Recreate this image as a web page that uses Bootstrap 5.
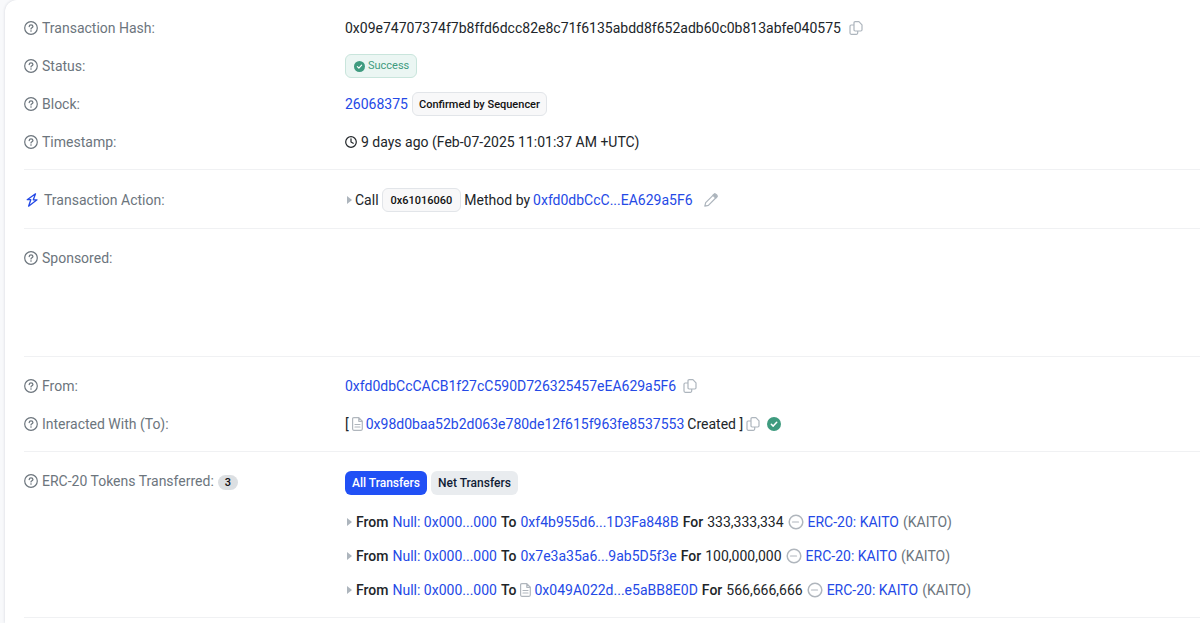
<!DOCTYPE html>
<html lang="en">
<head>
<meta charset="utf-8">
<meta name="viewport" content="width=device-width, initial-scale=1">
<title>Transaction Details</title>
<link href="https://cdn.jsdelivr.net/npm/bootstrap@5.3.0/dist/css/bootstrap.min.css" rel="stylesheet">
<style>
  body { font-family: Roboto, "Liberation Sans", sans-serif; font-size: 14px; line-height: 22px; color: #212529; background: #f8f9fb; overflow-x: hidden; }
  a { color: #2449e6; text-decoration: none; }
  svg { display: block; flex: none; fill: none; stroke: currentColor; stroke-linecap: round; stroke-linejoin: round; }
  .panel { margin-left: 5px; padding-left: 19px; background: #fff; border-radius: 12px 0 0 0; box-shadow: 0 0 3px rgba(20, 30, 60, .16); min-height: 100vh; }
  .section { padding: 17px 0 15px; border-bottom: 1px solid #f0f1f3; display: grid; gap: 14px; }
  .section:first-child { padding-top: 16px; }
  .sponsor { min-height: 128px; align-content: start; }
  .fact { display: grid; grid-template-columns: 321px minmax(0, 1fr); }
  .fact dt { font-weight: 400; color: #6c757d; min-height: 24px; }
  .fact dd { margin: 0; min-height: 24px; }
  .fact-action dt, .fact-action dd { min-height: 26px; }
  .line { display: flex; align-items: center; flex-wrap: wrap; gap: 4px; }
  .tight { gap: 3px; }
  .icon-btn { border: 0; padding: 0; background: none; color: #adb5bd; margin-left: 4px; }
  .far { margin-left: 8px; }
  .caret { margin-left: 2px; }
  .bolt { color: #2449e6; }
  .tag { font-size: 11px; line-height: 16px; padding: 4px 6px 2px; border: 1px solid #e2e5e9; border-radius: 6px; background: #f8f8f9; color: #111; font-weight: 500; }
  .tag-ok { background: #ebf6f3; border-color: #c9e5dc; color: #3f9b7f; font-weight: 400; gap: 3px; padding: 3px 7px 3px 8px; }
  .count { background: #dcdfe2; color: #111; font-size: 11px; line-height: 15px; padding: 0 7px; font-weight: 500; margin-top: 2px; }
  .tabs { min-height: 28px; margin-bottom: 13px; }
  .tabs .btn { font-size: 12px; line-height: 16px; padding: 4px 7px; border: 0; border-radius: 6px; font-weight: 500; background: #e9ecef; color: #101c36; }
  .tabs .btn.active { background: #2150f5; color: #fff; }
  .transfers { display: grid; gap: 10px; }
  .transfers li { min-height: 24px; }
  .strong-word { font-weight: 500; }
  .dim { color: #b0b6bd; }
  @media (max-width: 767px) { .fact { grid-template-columns: minmax(0, 1fr); } dd { overflow-wrap: anywhere; } }
</style>
</head>
<body>
<svg class="d-none" aria-hidden="true">
  <symbol id="help" viewBox="0 0 14 14"><circle cx="7" cy="7" r="6.3" stroke-width="1.2"/><path d="M5.2 5.5c.1-1 .8-1.6 1.8-1.6 1.1 0 1.9.6 1.9 1.5 0 .6-.3 1-.9 1.3-.7.4-1 .6-1 1.2" stroke-width="1.3"/><circle cx="7" cy="10" r=".8" fill="currentColor" stroke="none"/></symbol>
  <symbol id="copy" viewBox="0 0 14 14"><path d="M6.200.7h3.700l3.100 3.100v5c0 .8-.4 1.200-1.200 1.200H6.200C5.400 10 5 9.600 5 8.800V1.900C5 1.100 5.400.7 6.200.7zM4.500 4H2.200C1.400 4 1 4.400 1 5.200v6.900c0 .8.4 1.200 1.200 1.200h5.300c.8 0 1.200-.4 1.200-1.200V10.500" stroke-width="1.200"/></symbol>
  <symbol id="check" viewBox="0 0 14 14"><circle cx="7" cy="7" r="7" fill="#3f9b7f" stroke="none"/><path d="M4.300 7.200l1.900 1.900 3.500-3.800" stroke="#fff" stroke-width="1.500"/></symbol>
  <symbol id="doc" viewBox="0 0 11 14"><path d="M1.800.7h5l3.500 3.500v7.900c0 .8-.4 1.200-1.200 1.200H1.800c-.8 0-1.200-.4-1.200-1.200V1.900C.6 1.100 1 .7 1.800.7zM6.800 1v3.300h3.300M3 7.500h5M3 10h5" stroke-width="1.200"/></symbol>
  <symbol id="caret" viewBox="0 0 5 8"><path d="M0 0v8l5-4z" fill="#adb5bd" stroke="none"/></symbol>
  <symbol id="coin" viewBox="0 0 16 16"><circle cx="8" cy="8" r="6.800" stroke-width="1.500"/><path d="M4.500 8h6" stroke-width="1.200"/></symbol>
</svg>
<main class="panel">
  <dl class="section mb-0">
    <div class="fact"><dt class="line"><svg width="14" height="14"><use href="#help"/></svg>Transaction Hash:</dt>
      <dd class="line"><span>0x09e74707374f7b8ffd6dcc82e8c71f6135abdd8f652adb60c0b813abfe040575</span><button class="icon-btn" aria-label="Copy hash"><svg width="14" height="14"><use href="#copy"/></svg></button></dd></div>
    <div class="fact"><dt class="line"><svg width="14" height="14"><use href="#help"/></svg>Status:</dt>
      <dd class="line"><span class="tag tag-ok d-flex align-items-center"><svg width="11" height="11"><use href="#check"/></svg>Success</span></dd></div>
    <div class="fact"><dt class="line"><svg width="14" height="14"><use href="#help"/></svg>Block:</dt>
      <dd class="line"><a href="#">26068375</a><span class="tag">Confirmed by Sequencer</span></dd></div>
    <div class="fact"><dt class="line"><svg width="14" height="14"><use href="#help"/></svg>Timestamp:</dt>
      <dd class="line"><svg width="12" height="12" viewBox="0 0 12 12" stroke-width="1.200"><circle cx="6" cy="6" r="5.300"/><path d="M6 2.800V6l2.200 1.300"/></svg><span>9 days ago (Feb-07-2025 11:01:37 AM +UTC)</span></dd></div>
  </dl>
  <dl class="section mb-0">
    <div class="fact fact-action"><dt class="line"><svg class="bolt" width="16" height="14" viewBox="0 0 16 14" stroke-width="1.300"><path d="M11.500.8L3.200 6.700h3.600L4.600 13.200l8.400-6.400H9.300z"/></svg>Transaction Action:</dt>
      <dd class="line tight"><svg class="caret" width="5" height="8"><use href="#caret"/></svg><span>Call</span><span class="tag px-2">0x61016060</span><span>Method by</span><a href="#">0xfd0dbCcC...EA629a5F6</a><button class="icon-btn far" aria-label="Edit note"><svg width="14" height="14" viewBox="0 0 14 14" stroke-width="1.200"><path d="M.8 13.200l.9-3.600L10 1.300c.6-.6 1.400-.6 2 0l.7.7c.6.600.6 1.400 0 2L4.400 12.300z"/><path d="M9 2.300l2.700 2.700 1.300-1.500-2.500-2.500z" fill="currentColor"/></svg></button></dd></div>
  </dl>
  <dl class="section sponsor mb-0">
    <div class="fact"><dt class="line"><svg width="14" height="14"><use href="#help"/></svg>Sponsored:</dt><dd></dd></div>
  </dl>
  <dl class="section mb-0">
    <div class="fact"><dt class="line"><svg width="14" height="14"><use href="#help"/></svg>From:</dt>
      <dd class="line tight"><a href="#">0xfd0dbCcCACB1f27cC590D726325457eEA629a5F6</a><button class="icon-btn" aria-label="Copy address"><svg width="14" height="14"><use href="#copy"/></svg></button></dd></div>
    <div class="fact"><dt class="line"><svg width="14" height="14"><use href="#help"/></svg>Interacted With (To):</dt>
      <dd class="line tight"><span>[</span><svg class="dim" width="11" height="14"><use href="#doc"/></svg><a href="#">0x98d0baa52b2d063e780de12f615f963fe8537553</a><span>Created ]</span><button class="icon-btn ms-0" aria-label="Copy contract"><svg width="14" height="14"><use href="#copy"/></svg></button><svg class="ms-1" width="14" height="14"><use href="#check"/></svg></dd></div>
  </dl>
  <dl class="section mb-0">
    <div class="fact"><dt class="line align-self-start"><svg width="14" height="14"><use href="#help"/></svg>ERC-20 Tokens Transferred:<span class="badge rounded-pill count">3</span></dt>
      <dd>
        <div class="tabs line"><button class="btn active">All Transfers</button><button class="btn">Net Transfers</button></div>
        <ul class="transfers list-unstyled mb-0">
          <li class="line"><svg class="caret" width="5" height="8"><use href="#caret"/></svg><span class="strong-word">From</span><a href="#">Null: 0x000...000</a><span class="strong-word">To</span><a href="#">0xf4b955d6...1D3Fa848B</a><span class="strong-word">For</span><span>333,333,334</span><svg class="dim" width="16" height="16"><use href="#coin"/></svg><a href="#">ERC-20: KAITO</a><span class="text-secondary">(KAITO)</span></li>
          <li class="line"><svg class="caret" width="5" height="8"><use href="#caret"/></svg><span class="strong-word">From</span><a href="#">Null: 0x000...000</a><span class="strong-word">To</span><a href="#">0x7e3a35a6...9ab5D5f3e</a><span class="strong-word">For</span><span>100,000,000</span><svg class="dim" width="16" height="16"><use href="#coin"/></svg><a href="#">ERC-20: KAITO</a><span class="text-secondary">(KAITO)</span></li>
          <li class="line"><svg class="caret" width="5" height="8"><use href="#caret"/></svg><span class="strong-word">From</span><a href="#">Null: 0x000...000</a><span class="strong-word">To</span><span class="line tight"><svg class="dim" width="11" height="14"><use href="#doc"/></svg><a href="#">0x049A022d...e5aBB8E0D</a></span><span class="strong-word">For</span><span>566,666,666</span><svg class="dim" width="16" height="16"><use href="#coin"/></svg><a href="#">ERC-20: KAITO</a><span class="text-secondary">(KAITO)</span></li>
        </ul>
      </dd></div>
  </dl>
</main>
<script src="https://cdn.jsdelivr.net/npm/bootstrap@5.3.0/dist/js/bootstrap.bundle.min.js"></script>
</body>
</html>
